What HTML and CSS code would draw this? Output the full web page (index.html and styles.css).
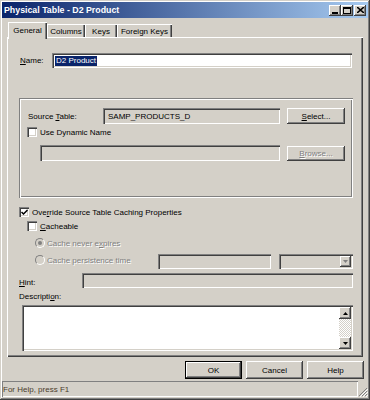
FILE: index.html
```html
<!DOCTYPE html>
<html lang="en">

<head>
    <meta charset="UTF-8">
    <meta name="viewport" content="width=device-width, initial-scale=1.0">
    <!-- Estilos de la ventana -->
    <link rel="stylesheet" href="styles.css">
    <title>Physical Table - D2 Product</title>
</head>

<body>
    <!-- Ventana principal -->
    <div class="ventana">
        <div class="barraTitulo">
            <span class="titulo">Physical Table - D2 Product</span>
            <div class="botonesTitulo">
                <span class="btnTitulo"><svg width="6" height="2" viewBox="0 0 6 2"><rect x="0" y="0" width="6" height="2" fill="#000"/></svg></span>
                <span class="btnTitulo"><svg width="8" height="7" viewBox="0 0 8 7"><rect x="0.5" y="0.5" width="7" height="6" fill="none" stroke="#000"/><rect x="0" y="0" width="8" height="2" fill="#000"/></svg></span>
                <span class="btnTitulo cerrar"><svg width="7" height="6" viewBox="0 0 7 6"><path d="M0 0 L7 6 M7 0 L0 6" stroke="#000" stroke-width="1.6"/></svg></span>
            </div>
        </div>

        <!-- Pestañas -->
        <div class="pestanas">
            <span class="pestana activa">General</span>
            <span class="pestana">Columns</span>
            <span class="pestana">Keys</span>
            <span class="pestana">Foreign Keys</span>
        </div>

        <div class="panel">
            <div class="fila filaNombre">
                <span class="etiqueta etNombre"><u>N</u>ame:</span>
                <div class="campo blanco nombre"><span class="seleccion">D2 Product</span></div>
            </div>

            <div class="grupo">
                <div class="fila filaFuente">
                    <span class="etiqueta etFuente">Source <u>T</u>able:</span>
                    <div class="campo gris fuente">SAMP_PRODUCTS_D</div>
                    <span class="boton btnGrupo"><u>S</u>elect...</span>
                </div>
                <div class="fila filaCheck filaDinamico">
                    <span class="check blanco"></span>
                    <span class="etiqueta">Use Dynamic Name</span>
                </div>
                <div class="fila filaBrowse">
                    <div class="campo gris dinamico"></div>
                    <span class="boton btnGrupo deshabilitado"><u>B</u>rowse...</span>
                </div>
            </div>

            <div class="fila filaCheck filaOverride">
                <span class="check blanco"><svg width="7" height="7" viewBox="0 0 7 7"><path d="M0.5 3 L2.5 5 L6.5 1" fill="none" stroke="#000" stroke-width="1.5"/></svg></span>
                <span class="etiqueta">Ove<u>r</u>ride Source Table Caching Properties</span>
            </div>
            <div class="fila filaCheck filaCache">
                <span class="check blanco"></span>
                <span class="etiqueta"><u>C</u>acheable</span>
            </div>
            <div class="fila filaCheck filaRadio">
                <span class="radio"><span class="punto"></span></span>
                <span class="etiqueta deshabilitado">Cache never e<u>x</u>pires</span>
            </div>
            <div class="fila filaPersistencia">
                <span class="radio"></span>
                <span class="etiqueta deshabilitado etPersistencia">Cache persistence time</span>
                <div class="campo gris tiempo"></div>
                <div class="campo gris combo">
                    <span class="flechaCombo"><svg width="5" height="3" viewBox="0 0 5 3"><path d="M0 0 H5 L2.5 3 Z" fill="#808080"/></svg></span>
                </div>
            </div>
            <div class="fila filaHint">
                <span class="etiqueta etHint"><u>H</u>int:</span>
                <div class="campo gris hint"></div>
            </div>
            <div class="etiqueta etDescripcion">Descripti<u>o</u>n:</div>
            <div class="campo blanco descripcion">
                <div class="scroll">
                    <span class="btnScroll"><svg width="5" height="3" viewBox="0 0 5 3"><path d="M0 3 H5 L2.5 0 Z" fill="#000"/></svg></span>
                    <span class="pista"></span>
                    <span class="btnScroll"><svg width="5" height="3" viewBox="0 0 5 3"><path d="M0 0 H5 L2.5 3 Z" fill="#000"/></svg></span>
                </div>
            </div>
        </div>

        <!-- Botones de la ventana -->
        <div class="botones">
            <span class="boton btnDialogo predeterminado">OK</span>
            <span class="boton btnDialogo">Cancel</span>
            <span class="boton btnDialogo">Help</span>
        </div>

        <div class="barraEstado">
            <span class="textoEstado">For Help, press F1</span>
            <span class="agarre"><svg width="10" height="10" viewBox="0 0 10 10"><path d="M9 1 L1 9 M9 4 L4 9 M9 7 L7 9" stroke="#808080" stroke-width="1"/><path d="M10 2 L2 10 M10 5 L5 10 M10 8 L8 10" stroke="#fff" stroke-width="1"/></svg></span>
        </div>
    </div>
</body>

</html>
```

FILE: styles.css
```css
body {
    margin: 0px;
    background-color: #d4d0c8;
    font-family: "Liberation Sans", Arial, sans-serif;
    font-size: 8px;
    color: #000;
}

u {
    text-decoration: underline;
}

.ventana {
    width: 370px;
    height: 400px;
    box-sizing: border-box;
    padding: 2px;
    overflow: hidden;
    background-color: #d4d0c8;
    box-shadow: inset -1px -1px #404040, inset 1px 1px #d4d0c8, inset -2px -2px #808080, inset 2px 2px #fff;
}

.barraTitulo {
    height: 16px;
    display: flex;
    align-items: center;
    justify-content: space-between;
    padding: 0px 2px 0px 2px;
    background: linear-gradient(to right, #0a246a, #a6caf0);
}

.titulo {
    color: #fff;
    font-weight: bold;
    font-size: 8.8px;
}

.botonesTitulo {
    display: flex;
}

.btnTitulo {
    width: 12px;
    height: 11px;
    box-sizing: border-box;
    display: flex;
    align-items: center;
    justify-content: center;
    background-color: #d4d0c8;
    box-shadow: inset -1px -1px #404040, inset 1px 1px #fff, inset -2px -2px #808080;
}

.btnTitulo:first-child svg {
    margin-top: 5px;
}

.cerrar {
    margin-left: 1px;
}

/* Pestañas */
.pestanas {
    display: flex;
    align-items: flex-end;
    height: 15px;
    margin: 4px 0px 0px 6px;
    position: relative;
    z-index: 1;
}

.pestana {
    height: 13px;
    box-sizing: border-box;
    display: flex;
    align-items: center;
    justify-content: center;
    padding-top: 1px;
    box-shadow: inset 1px 1px #fff, inset -1px 0px #404040, inset -2px 0px #808080;
}

.pestana:nth-child(1) {
    width: 39px;
}

.pestana:nth-child(2) {
    width: 38px;
}

.pestana:nth-child(3) {
    width: 32px;
}

.pestana:nth-child(4) {
    width: 55px;
}

.activa {
    height: 17px;
    margin-bottom: -2px;
    background-color: #d4d0c8;
    padding-bottom: 2px;
}

/* Panel principal */
.panel {
    width: 356px;
    height: 320px;
    margin-left: 5px;
    box-sizing: border-box;
    padding: 16px 0px 0px 12px;
    box-shadow: inset 1px 1px #fff, inset -1px -1px #404040, inset -2px -2px #808080;
}

.fila {
    display: flex;
    align-items: center;
}

.etiqueta {
    white-space: nowrap;
}

.deshabilitado {
    color: #808080;
    text-shadow: 1px 1px #fff;
}

.campo {
    box-sizing: border-box;
    box-shadow: inset 1px 1px #808080, inset 2px 2px #404040, inset -1px -1px #fff, inset -2px -2px #d4d0c8;
}

.blanco {
    background-color: #fff;
}

.gris {
    background-color: #d4d0c8;
}

.filaNombre {
    height: 15px;
}

.etNombre {
    width: 32px;
    padding-left: 1px;
}

.nombre {
    width: 300px;
    height: 15px;
    padding: 2px 3px;
    display: flex;
    align-items: center;
}

.seleccion {
    background-color: #0a246a;
    color: #fff;
    padding: 0px 1px;
    line-height: 10px;
}

.grupo {
    width: 334px;
    height: 100px;
    margin-top: 30px;
    box-sizing: border-box;
    padding: 10px 0px 0px 9px;
    box-shadow: inset 1px 1px #808080, inset 2px 2px #fff, inset -1px -1px #fff, inset -2px -2px #808080;
}

.filaFuente {
    height: 16px;
}

.etFuente {
    width: 75px;
}

.fuente {
    width: 177px;
    height: 16px;
    padding-left: 5px;
    display: flex;
    align-items: center;
}

.boton {
    box-sizing: border-box;
    display: flex;
    align-items: center;
    justify-content: center;
    background-color: #d4d0c8;
    box-shadow: inset -1px -1px #404040, inset 1px 1px #fff, inset -2px -2px #808080;
}

.btnGrupo {
    width: 58px;
    height: 16px;
    margin-left: 7px;
}

.filaCheck {
    height: 12px;
}

.check {
    width: 10px;
    height: 10px;
    box-sizing: border-box;
    display: flex;
    align-items: center;
    justify-content: center;
    margin-right: 3px;
    box-shadow: inset 1px 1px #808080, inset 2px 2px #404040, inset -1px -1px #fff, inset -2px -2px #d4d0c8;
}

.filaDinamico {
    margin: 2px 0px 0px -1px;
}

.filaBrowse {
    height: 16px;
    margin: 7px 0px 0px 12px;
}

.dinamico {
    width: 240px;
    height: 16px;
}

.filaBrowse .btnGrupo {
    margin-top: 1px;
    height: 15px;
}

.filaOverride {
    margin-top: 8px;
}

.filaCache {
    margin: 2px 0px 0px 8px;
}

.filaRadio {
    margin: 5px 0px 0px 16px;
}

.radio {
    width: 10px;
    height: 10px;
    box-sizing: border-box;
    border-radius: 50%;
    border: 1px solid #808080;
    border-right-color: #fff;
    border-bottom-color: #fff;
    background-color: #d4d0c8;
    margin-right: 2px;
    display: flex;
    align-items: center;
    justify-content: center;
}

.punto {
    width: 4px;
    height: 4px;
    border-radius: 50%;
    background-color: #808080;
}

.filaPersistencia {
    height: 15px;
    margin: 5px 0px 0px 16px;
}

.filaPersistencia .radio {
    margin-top: -3px;
}

.etPersistencia {
    width: 111px;
    margin-top: -3px;
}

.tiempo {
    width: 113px;
    height: 15px;
}

.combo {
    width: 74px;
    height: 15px;
    margin-left: 8px;
    padding: 2px;
    display: flex;
    justify-content: flex-end;
}

.flechaCombo {
    width: 11px;
    height: 11px;
    display: flex;
    align-items: center;
    justify-content: center;
    box-sizing: border-box;
    box-shadow: inset -1px -1px #404040, inset 1px 1px #fff, inset -2px -2px #808080;
}

.filaHint {
    height: 15px;
    margin-top: 4px;
}

.etHint {
    width: 63px;
    margin-top: 3px;
}

.hint {
    width: 271px;
    height: 15px;
}

.etDescripcion {
    height: 10px;
    margin-top: 4px;
    line-height: 10px;
}

.descripcion {
    width: 331px;
    height: 46px;
    margin: 3px 0px 0px 3px;
    padding: 2px;
    display: flex;
    justify-content: flex-end;
}

.scroll {
    width: 12px;
    display: flex;
    flex-direction: column;
}

.btnScroll {
    height: 12px;
    display: flex;
    align-items: center;
    justify-content: center;
    background-color: #d4d0c8;
    box-shadow: inset -1px -1px #404040, inset 1px 1px #fff, inset -2px -2px #808080;
}

.pista {
    flex: 1;
    background: repeating-conic-gradient(#fff 0 25%, #d4d0c8 0 50%) 0 0 / 2px 2px;
}

/* Botones inferiores */
.botones {
    display: flex;
    justify-content: flex-end;
    gap: 4px;
    margin: 4px 4px 0px 0px;
}

.btnDialogo {
    width: 57px;
    height: 18px;
}

.predeterminado {
    box-shadow: inset 0px 0px 0px 1px #000, inset -2px -2px #404040, inset 2px 2px #fff, inset -3px -3px #808080;
}

.barraEstado {
    display: flex;
    height: 16px;
    margin-top: 2px;
}

.textoEstado {
    flex: 1;
    display: flex;
    align-items: center;
    padding-left: 1px;
    color: #4b3c2c;
    box-shadow: inset 1px 1px #808080, inset -1px -1px #fff;
}

.agarre {
    width: 10px;
    display: flex;
    align-items: flex-end;
}
```
